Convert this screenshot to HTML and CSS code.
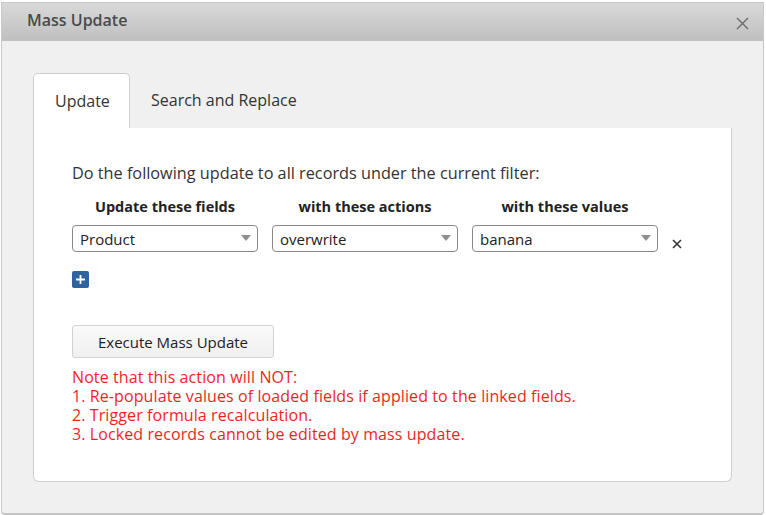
FILE: index.html
```html
<!DOCTYPE html>
<html>
<head>
<meta charset="utf-8">
<link rel="stylesheet" href="styles.css">
</head>
<body>
<div class="dialog">
  <div class="header">
    <div class="title">Mass Update</div>
    <div class="close">
      <svg width="13" height="13" viewBox="0 0 13 13"><path d="M1 1L12 12M12 1L1 12" stroke="#6a6a6a" stroke-width="1.4" fill="none"/></svg>
    </div>
  </div>
  <div class="body">
    <div class="tabs">
      <div class="tab active">Update</div>
      <div class="tab">Search and Replace</div>
    </div>
    <div class="panel">
      <div class="intro">Do the following update to all records under the current filter:</div>
      <div class="grid">
        <div class="colhead">Update these fields</div>
        <div class="colhead">with these actions</div>
        <div class="colhead">with these values</div>
        <div></div>
        <div class="select"><span>Product</span><i class="arrow"></i></div>
        <div class="select"><span>overwrite</span><i class="arrow"></i></div>
        <div class="select"><span>banana</span><i class="arrow"></i></div>
        <div class="remove">
          <svg width="10" height="10" viewBox="0 0 10 10"><path d="M1 1L9 9M9 1L1 9" stroke="#333" stroke-width="1.6" fill="none"/></svg>
        </div>
      </div>
      <div class="add">
        <svg width="17" height="17" viewBox="0 0 17 17"><rect x="0" y="0" width="17" height="17" rx="2" fill="#2f63a0"/><path d="M8.5 4V13M4 8.5H13" stroke="#fff" stroke-width="1.8"/></svg>
      </div>
      <button class="exec">Execute Mass Update</button>
      <div class="note">
        <div>Note that this action will NOT:</div>
        <div>1. Re-populate values of loaded fields if applied to the linked fields.</div>
        <div>2. Trigger formula recalculation.</div>
        <div>3. Locked records cannot be edited by mass update.</div>
      </div>
    </div>
  </div>
</div>
</body>
</html>
```

FILE: styles.css
```css
* { box-sizing: border-box; }
html, body { margin: 0; padding: 0; }
body {
  width: 766px;
  height: 515px;
  background: #ffffff;
  font-family: "Open Sans", "DejaVu Sans", sans-serif;
  overflow: hidden;
}
.dialog {
  margin: 2px 2px 0 1px;
  height: 513px;
  border: 1px solid #c8c8c8;
  border-bottom: 2px solid #c4c4c4;
  border-radius: 0 0 4px 4px;
  background: #f0f0f0;
  display: flex;
  flex-direction: column;
}
.header {
  height: 38px;
  background: linear-gradient(#d9d9d9, #bfbfbf);
  display: flex;
  align-items: center;
  justify-content: space-between;
  padding: 0 14px 0 25px;
  flex: none;
}
.title {
  font-size: 16px;
  font-weight: 600;
  color: #4a4a4a;
  margin-top: -4px;
}
.close { display: flex; margin-top: 2px; }
.body {
  padding: 32px 31px 0 31px;
  flex: 1;
}
.tabs {
  display: flex;
  height: 55px;
}
.tab {
  font-size: 16px;
  color: #333;
  padding: 15px 21px 0 21px;
  line-height: 24px;
}
.tab.active {
  background: #fff;
  border: 1px solid #cfcfcf;
  border-bottom: none;
  border-radius: 5px 5px 0 0;
  width: 97px;
  padding-left: 21px;
}
.panel {
  background: #fff;
  border: 1px solid #cfcfcf;
  border-top: none;
  border-radius: 0 0 6px 6px;
  height: 354px;
  padding: 34px 38px 0 38px;
}
.intro {
  font-size: 16.25px;
  color: #333;
  line-height: 22px;
}
.grid {
  display: grid;
  grid-template-columns: 186px 186px 186px 30px;
  column-gap: 14px;
  row-gap: 8px;
  margin-top: 13px;
}
.colhead {
  text-align: center;
  font-size: 14.5px;
  font-weight: 700;
  color: #222;
  line-height: 20px;
}
.select {
  height: 27px;
  border: 1px solid #8a8a8a;
  border-radius: 4px;
  display: flex;
  align-items: center;
  justify-content: space-between;
  padding: 0 6px 0 7px;
  font-size: 15px;
  color: #222;
}
.arrow {
  width: 0; height: 0;
  border-left: 5px solid transparent;
  border-right: 5px solid transparent;
  border-top: 6px solid #8f8f8f;
  margin-top: -2px;
}
.remove {
  display: flex;
  align-items: center;
  padding-top: 10px;
}
.add {
  display: flex;
  margin-top: 19px;
}
.exec {
  display: block;
  margin-top: 37px;
  width: 202px;
  height: 33px;
  border: 1px solid #d2d2d2;
  border-radius: 3px;
  background: linear-gradient(#fafafa, #f0f0f0);
  font-family: "Open Sans", "DejaVu Sans", sans-serif;
  font-size: 15px;
  color: #222;
  padding: 0;
}
.note {
  margin-top: 10px;
  color: #f21f1f;
  font-size: 16px;
  letter-spacing: 0.1px;
  line-height: 19px;
}
```
